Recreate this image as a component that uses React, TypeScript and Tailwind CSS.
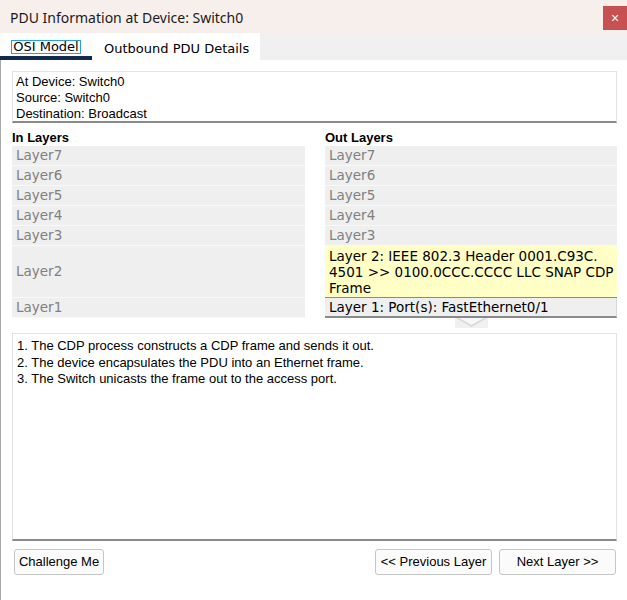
const arial = { fontFamily: '"Liberation Sans", Arial, sans-serif' };

const leftLayers = ["Layer7", "Layer6", "Layer5", "Layer4", "Layer3"];

const LayerRow = ({ label, tall }: { label: string; tall?: boolean }) => (
  <div
    className={`flex items-center border-b border-[#f9f9f9] bg-[#efefef] pl-[4px] text-[13.5px] text-[#808080] ${
      tall ? "h-[52px]" : "h-[20px]"
    }`}
  >
    {label}
  </div>
);

const Button = ({ children, className }: { children: string; className: string }) => (
  <button
    className={`h-[26px] rounded-[3px] border border-[#c6c6c6] bg-[#fbfbfb] text-[13px] text-black ${className}`}
    style={arial}
  >
    {children}
  </button>
);

export default function App() {
  return (
    <div
      className="flex h-[600px] w-[627px] flex-col overflow-hidden bg-white"
      style={{ fontFamily: '"DejaVu Sans", Verdana, sans-serif' }}
    >
      {/* title bar */}
      <div className="flex h-[33px] shrink-0 items-start justify-between bg-[#f7efec]">
        <div
          className="pl-[10px] pt-[7px] text-[14px] text-[#1a1a1a]"
          style={{ fontFamily: '"Noto Sans", sans-serif' }}
        >
          PDU Information at Device: Switch0
        </div>
        <div className="mt-[6px] flex h-[24px] w-[24px] items-center justify-center bg-[#c75050] text-[14px] text-white" style={arial}>
          ×
        </div>
      </div>

      {/* tabs */}
      <div className="flex h-[27px] shrink-0 bg-[#f0f0f0]">
        <div className="flex w-[260px] bg-white text-[13px] text-black">
          <div className="flex w-[92px] flex-col border-b-4 border-[#0f2a4a]">
            <div className="ml-[11px] mt-[7px] h-[14px] w-[70px] border border-[#26a0da] text-center leading-[12px]">
              OSI Model
            </div>
          </div>
          <div className="pl-[12px] pt-[6px]">Outbound PDU Details</div>
        </div>
      </div>

      {/* body */}
      <div className="flex flex-1 flex-col border-l border-[#a8a8a8] pl-[11px] pr-[10px]">
        <div
          className="mt-[11px] h-[52px] border border-b-2 border-[#e3e3e3] border-b-[#8a8a8a] pl-[3px] pt-[2px] text-[13px] leading-[16px] text-black"
          style={arial}
        >
          <div>At Device: Switch0</div>
          <div>Source: Switch0</div>
          <div>Destination: Broadcast</div>
        </div>

        <div className="mt-[7px] grid grid-cols-[293px_292px] gap-x-[20px]">
          <div className="flex flex-col">
            <div className="h-[16px] text-[13px] font-bold leading-[16px] text-black" style={arial}>
              In Layers
            </div>
            {leftLayers.map((l) => (
              <LayerRow key={l} label={l} />
            ))}
            <LayerRow label="Layer2" tall />
            <LayerRow label="Layer1" />
          </div>
          <div className="flex flex-col">
            <div className="h-[16px] text-[13px] font-bold leading-[16px] text-black" style={arial}>
              Out Layers
            </div>
            {leftLayers.map((l) => (
              <LayerRow key={l} label={l} />
            ))}
            <div className="h-[52px] border-b border-[#8a8a8a] bg-[#ffffc6] pl-[4px] pt-[2px] text-[13.5px] leading-[16px] text-black">
              Layer 2: IEEE 802.3 Header 0001.C93C.
              <br />
              4501 &gt;&gt; 0100.0CCC.CCCC LLC SNAP CDP
              <br />
              Frame
            </div>
            <div className="flex h-[20px] items-center border-b-2 border-r border-[#8a8a8a] border-r-[#d8d8d8] bg-[#efefef] pl-[4px] text-[13.5px] text-black">
              Layer 1: Port(s): FastEthernet0/1
            </div>
            <div className="flex justify-center">
              <svg width="33" height="10" viewBox="0 0 33 10">
                <rect width="33" height="10" fill="#f0f0f0" />
                <polygon points="1,0 32,0 16.5,9" fill="#d9d9d9" />
                <polygon points="4,0 29,0 16.5,7" fill="#f7f7f7" />
              </svg>
            </div>
          </div>
        </div>

        <div
          className="mt-[5px] h-[208px] border border-b-2 border-[#e3e3e3] border-b-[#8a8a8a] pl-[4px] pt-[4px] text-[13px] leading-[16.5px] text-black"
          style={arial}
        >
          <div>1. The CDP process constructs a CDP frame and sends it out.</div>
          <div>2. The device encapsulates the PDU into an Ethernet frame.</div>
          <div>3. The Switch unicasts the frame out to the access port.</div>
        </div>

        <div className="mt-[8px] flex items-center">
          <Button className="ml-[2px] w-[90px]">Challenge Me</Button>
          <div className="flex-1" />
          <Button className="w-[117px]">&lt;&lt; Previous Layer</Button>
          <Button className="ml-[7px] mr-[1px] w-[117px]">Next Layer &gt;&gt;</Button>
        </div>
      </div>
    </div>
  );
}
